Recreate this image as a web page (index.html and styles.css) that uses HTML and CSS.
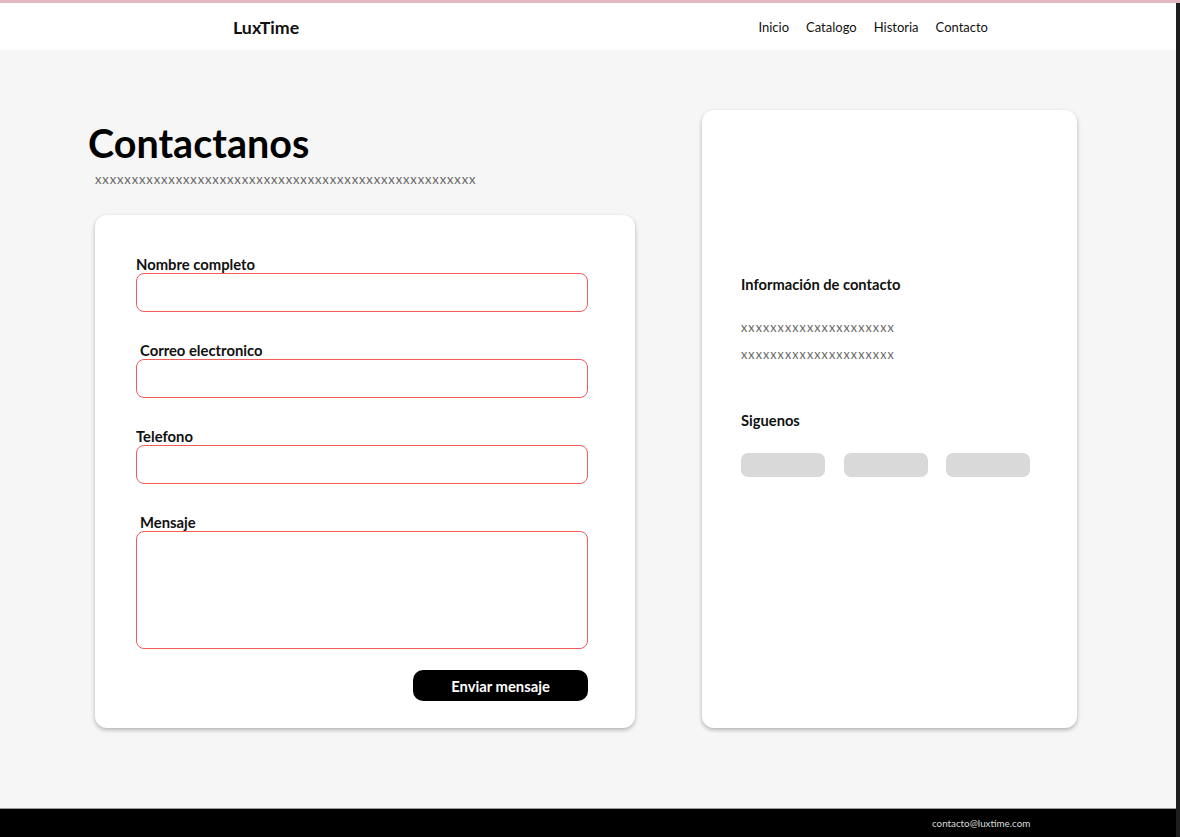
FILE: index.html
```html
<!DOCTYPE html>
<html lang="es">
<head>
<meta charset="utf-8">
<title>LuxTime - Contacto</title>
<link rel="stylesheet" href="styles.css">
</head>
<body>
<div class="page">
  <header class="topbar">
    <div class="logo">LuxTime</div>
    <nav class="nav">
      <a href="#">Inicio</a>
      <a href="#">Catalogo</a>
      <a href="#">Historia</a>
      <a href="#">Contacto</a>
    </nav>
  </header>
  <main class="main">
    <section class="left">
      <h1 class="title">Contactanos</h1>
      <p class="subtitle">xxxxxxxxxxxxxxxxxxxxxxxxxxxxxxxxxxxxxxxxxxxxxxxxxxxx</p>
      <form class="form-card">
        <div class="field">
          <label class="label">Nombre completo</label>
          <input class="input" type="text">
        </div>
        <div class="field">
          <label class="label label-indent">Correo electronico</label>
          <input class="input" type="email">
        </div>
        <div class="field">
          <label class="label">Telefono</label>
          <input class="input" type="tel">
        </div>
        <div class="field">
          <label class="label label-indent">Mensaje</label>
          <textarea class="input textarea"></textarea>
        </div>
        <div class="actions">
          <button class="btn" type="button">Enviar mensaje</button>
        </div>
      </form>
    </section>
    <aside class="info-card">
      <h2 class="info-title">Información de contacto</h2>
      <p class="info-line first">xxxxxxxxxxxxxxxxxxxxx</p>
      <p class="info-line">xxxxxxxxxxxxxxxxxxxxx</p>
      <h2 class="info-title follow">Siguenos</h2>
      <div class="socials">
        <span class="pill"></span>
        <span class="pill"></span>
        <span class="pill"></span>
      </div>
    </aside>
  </main>
  <footer class="footer">
    <span class="footer-mail">contacto@luxtime.com</span>
  </footer>
</div>
</body>
</html>
```

FILE: styles.css
```css
* { box-sizing: border-box; }

html, body { margin: 0; padding: 0; }

body {
  background: #1e1e1e;
  border-top: 3px solid #e2b9c3;
  font-family: Lato, "Open Sans", Arial, sans-serif;
  color: #111;
  height: 837px;
  overflow: hidden;
}

.page {
  width: 1176px;
  background: #f6f6f6;
  display: flex;
  flex-direction: column;
}

.topbar {
  height: 47px;
  background: #ffffff;
  display: flex;
  align-items: center;
  justify-content: space-between;
  padding: 0 188px 0 233px;
}

.logo {
  font-size: 17.8px;
  font-weight: 700;
  color: #111;
}

.nav {
  display: flex;
  gap: 17px;
}

.nav a {
  font-size: 13px;
  color: #111;
  text-decoration: none;
}

.main {
  height: 758px;
  display: flex;
  padding-left: 87px;
  gap: 66px;
}

.left {
  width: 549px;
  padding-top: 70px;
}

.title {
  margin: 0 0 0 1px;
  font-size: 39.5px;
  line-height: 46px;
  font-weight: 700;
  color: #000;
}

.subtitle {
  margin: 5px 0 0 8px;
  font-size: 13px;
  line-height: 16px;
  color: #666;
  letter-spacing: 0.86px;
}

.form-card {
  margin: 28px 0 0 8px;
  width: 540px;
  background: #fff;
  border-radius: 12px;
  box-shadow: 0 2px 4px rgba(0, 0, 0, 0.28);
  padding: 41px 47px 27px 41px;
  display: flex;
  flex-direction: column;
  gap: 30px;
}

.field {
  display: flex;
  flex-direction: column;
}

.label {
  font-size: 14.8px;
  line-height: 17px;
  font-weight: 700;
  color: #111;
}

.label-indent { margin-left: 4px; }

.input {
  display: block;
  width: 452px;
  height: 39px;
  border: 1px solid #f45a5a;
  border-radius: 8px;
  background: #fff;
  font-family: inherit;
  outline: none;
}

.textarea {
  height: 118px;
  resize: none;
}

.actions {
  display: flex;
  justify-content: flex-end;
  width: 452px;
  margin-top: -9px;
}

.btn {
  width: 175px;
  height: 31px;
  border: none;
  border-radius: 10px;
  background: #000;
  color: #fff;
  font-family: inherit;
  font-size: 14.8px;
  font-weight: 700;
  cursor: pointer;
}

.info-card {
  margin-top: 60px;
  width: 375px;
  height: 618px;
  background: #fff;
  border-radius: 12px;
  box-shadow: 0 2px 4px rgba(0, 0, 0, 0.28);
  padding: 166px 39px 0 39px;
}

.info-title {
  margin: 0;
  font-size: 14.7px;
  line-height: 17px;
  font-weight: 700;
  color: #111;
}

.info-title.follow { margin-top: 49px; }

.info-line {
  margin: 11px 0 0 0;
  font-size: 12.5px;
  line-height: 16px;
  color: #666;
  letter-spacing: 1.1px;
}

.info-line.first { margin-top: 27px; }

.socials {
  display: flex;
  gap: 18.5px;
  margin-top: 24px;
}

.pill {
  width: 84px;
  height: 24px;
  border-radius: 7px;
  background: #d9d9d9;
}

.footer {
  height: 29px;
  background: #000;
  border-top: 1px solid #9a9a9a;
  display: flex;
  align-items: center;
  padding-left: 932px;
}

.footer-mail {
  font-size: 9.8px;
  color: #dcdcdc;
}
```
